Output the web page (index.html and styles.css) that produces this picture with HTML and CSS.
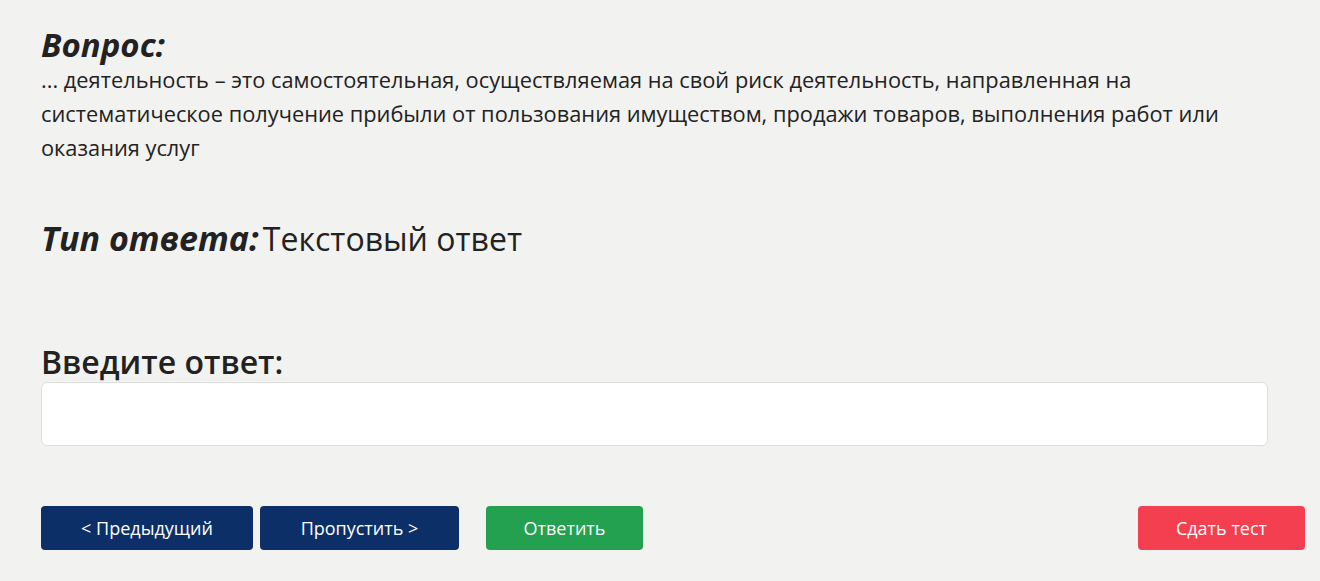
FILE: index.html
```html
<!DOCTYPE html>
<html lang="ru">
<head>
    <meta charset="UTF-8">
    <meta name="viewport" content="width=device-width, initial-scale=1.0">
    <title>Тест</title>
    <link rel="stylesheet" href="styles.css">
</head>
<body>
    <div class="question-page">
        <!-- Question text -->
        <div class="question-block">
            <h2 class="label-italic">Вопрос:</h2>
            <p class="question-text">... деятельность – это самостоятельная, осуществляемая на свой риск деятельность, направленная на систематическое получение прибыли от пользования имуществом, продажи товаров, выполнения работ или оказания услуг</p>
        </div>

        <!-- Answer type -->
        <div class="answer-type">
            <span class="label-italic">Тип ответа:</span>
            <span class="answer-type-value">Текстовый ответ</span>
        </div>

        <!-- Answer input -->
        <div class="answer-block">
            <h2 class="answer-label">Введите ответ:</h2>
            <input type="text" class="answer-input">
        </div>

        <!-- Navigation buttons -->
        <div class="actions">
            <div class="actions-left">
                <button class="btn btn-navy">&lt; Предыдущий</button>
                <button class="btn btn-navy btn-skip">Пропустить &gt;</button>
                <button class="btn btn-green">Ответить</button>
            </div>
            <button class="btn btn-red">Сдать тест</button>
        </div>
    </div>
</body>
</html>
```

FILE: styles.css
```css
/* General Body Styling */
body {
    margin: 0;
    padding: 0;
    background-color: #f2f2f1;
    color: #222222;
    font-family: "Open Sans", "Noto Sans", sans-serif;
}

.question-page {
    padding: 27px 52px 0 41px;
}

/* Question */
.label-italic {
    font-size: 33px;
    font-weight: 700;
    font-style: italic;
    margin: 0;
    line-height: 36px;
}

.question-text {
    margin: 0;
    font-size: 21.8px;
    line-height: 34px;
    max-width: 1200px;
}

/* Answer type */
.answer-type {
    margin-top: 51px;
    line-height: 46px;
}

.answer-type .label-italic {
    font-size: 34px;
}

.answer-type-value {
    font-size: 32px;
}

/* Answer input */
.answer-block {
    margin-top: 74px;
}

.answer-label {
    margin: 0;
    font-size: 32px;
    font-weight: 600;
    line-height: 40px;
}

.answer-input {
    display: block;
    box-sizing: border-box;
    width: 100%;
    height: 64px;
    border: 1px solid #dedede;
    border-radius: 6px;
    background-color: #ffffff;
    outline: none;
}

/* Buttons */
.actions {
    display: flex;
    justify-content: space-between;
    margin-top: 60px;
    margin-right: -37px;
}

.actions-left {
    display: flex;
    gap: 7px;
}

.btn {
    height: 44px;
    border: none;
    border-radius: 4px;
    color: #ffffff;
    font-family: "Open Sans", "Noto Sans", sans-serif;
    font-size: 18px;
    cursor: pointer;
}

.btn-navy {
    background-color: #0c2f68;
    width: 212px;
}

.btn-skip {
    width: 199px;
}

.btn-green {
    background-color: #23a050;
    width: 157px;
    margin-left: 20px;
}

.btn-red {
    background-color: #f43f50;
    width: 167px;
}
```
